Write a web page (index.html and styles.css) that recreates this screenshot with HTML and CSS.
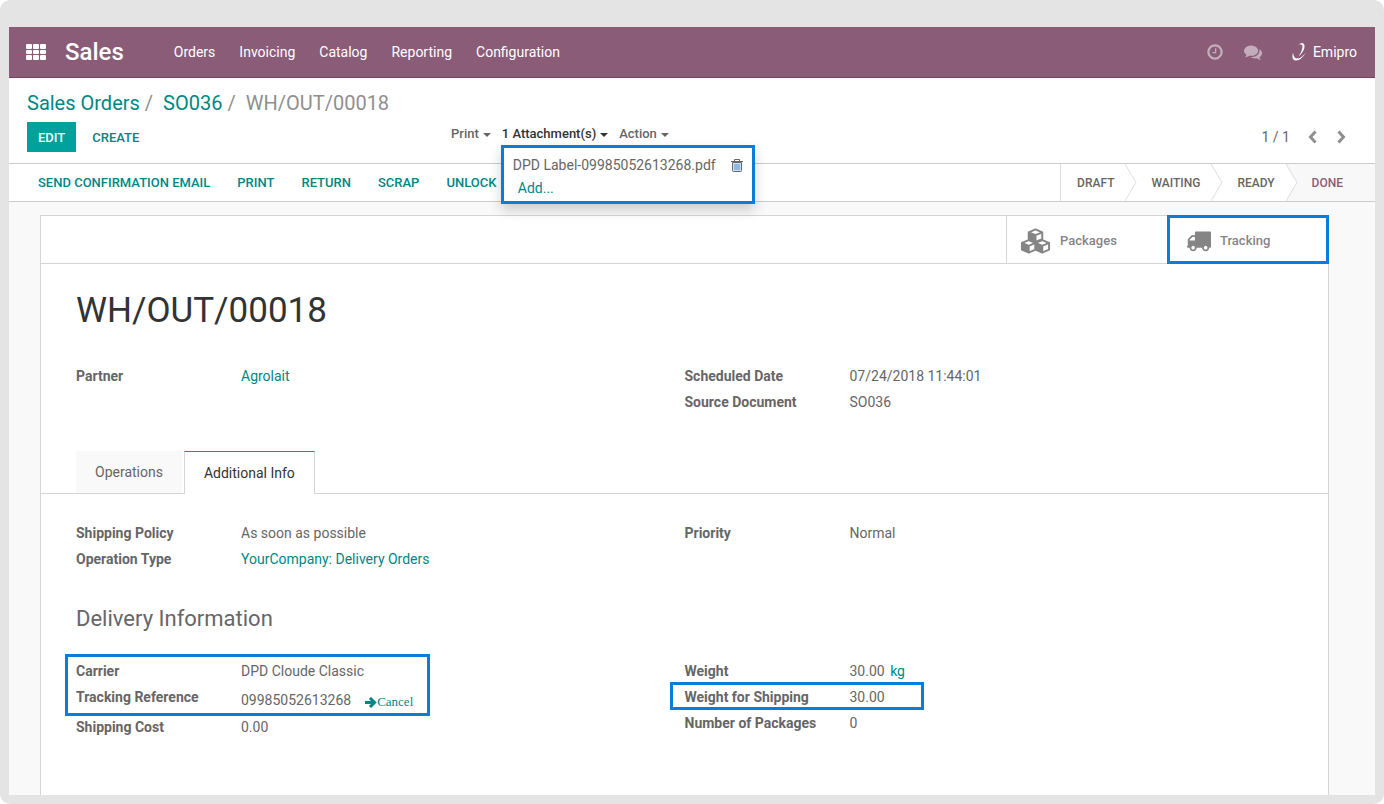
FILE: index.html
```html
<!DOCTYPE html>
<html lang="en">
<head>
<meta charset="utf-8">
<title>WH/OUT/00018 - Sales</title>
<link rel="stylesheet" href="styles.css">
</head>
<body>
<div class="app">
  <header class="navbar">
    <button class="apps" type="button" aria-label="Applications">
      <svg width="21" height="17" viewBox="0 0 21 17" fill="#fff"><rect x="0" y="0" width="6" height="5" rx="1"/><rect x="7" y="0" width="6" height="5" rx="1"/><rect x="14" y="0" width="6" height="5" rx="1"/><rect x="0" y="6" width="6" height="4" rx="1"/><rect x="7" y="6" width="6" height="4" rx="1"/><rect x="14" y="6" width="6" height="4" rx="1"/><rect x="0" y="11" width="6" height="5" rx="1"/><rect x="7" y="11" width="6" height="5" rx="1"/><rect x="14" y="11" width="6" height="5" rx="1"/></svg>
    </button>
    <a class="brand" href="#">Sales</a>
    <nav class="menu">
      <a href="#">Orders</a>
      <a href="#">Invoicing</a>
      <a href="#">Catalog</a>
      <a href="#">Reporting</a>
      <a href="#">Configuration</a>
    </nav>
    <div class="systray">
      <button type="button" aria-label="Activities"><svg width="18" height="18" viewBox="0 0 1792 1792" fill="#c4adbb"><path d="M1024 544v448q0 14-9 23t-23 9h-320q-14 0-23-9t-9-23v-64q0-14 9-23t23-9h224v-352q0-14 9-23t23-9h64q14 0 23 9t9 23zm416 352q0-148-73-273t-198-198-273-73-273 73-198 198-73 273 73 273 198 198 273 73 273-73 198-198 73-273zm224 0q0 209-103 385.5t-279.5 279.5-385.5 103-385.5-103-279.5-279.5-103-385.5 103-385.5 279.5-279.5 385.5-103 385.5 103 279.5 279.5 103 385.5z"/></svg></button>
      <button type="button" aria-label="Conversations"><svg width="18" height="18" viewBox="0 0 1792 1792" fill="#c4adbb"><path d="M1408 768q0 139-94 257t-256.5 186.5-353.5 68.5q-86 0-176-16-124 88-278 128-36 9-86 16h-3q-11 0-20.5-8t-11.5-21q-1-3-1-6.5t.5-6.5 2-6l2.5-5 3.5-5.5 4-5 4.5-5 4-4.5q5-6 23-25t26-29.5 22.5-29 25-38.5 20.5-44q-124-72-195-177t-71-224q0-139 94-257t256.5-186.5 353.5-68.5 353.5 68.5 256.5 186.5 94 257zm384 256q0 120-71 224.5t-195 176.5q10 24 20.5 44t25 38.5 22.5 29 26 29.5 23 25q1 1 4 4.5t4.5 5 4 5 3.5 5.5l2.5 5 2 6 .5 6.5-1 6.5q-3 14-13 22t-22 7q-50-7-86-16-154-40-278-128-90 16-176 16-271 0-472-132 58 4 88 4 161 0 309-45t264-129q125-92 192-212t67-254q0-77-23-152 129 71 204 178t75 230z"/></svg></button>
      <button class="user" type="button"><svg width="16" height="20" viewBox="0 0 16 20" fill="#fff"><path d="M1 10.500Q-1 18.500 4 18.500Q9 18.500 14 10.500Q9 16.500 5.500 16.500Q1.500 16.500 1 10.500Z"/><path d="M6 2.500Q12 -1 12.500 3.500Q13 9 6.500 14.500Q10 9.500 10.500 5Q10.500 1.500 6 2.500Z"/></svg>Emipro</button>
    </div>
  </header>

  <section class="control">
    <nav class="crumbs" aria-label="Breadcrumb">
      <a href="#">Sales Orders</a><span class="sep">/</span><a href="#">SO036</a><span class="sep">/</span><span>WH/OUT/00018</span>
    </nav>
    <div class="control-row">
      <div class="main-actions">
        <button class="btn primary" type="button">EDIT</button>
        <button class="btn" type="button">CREATE</button>
      </div>
      <div class="toggles">
        <button type="button">Print<i class="caret"></i></button>
        <div class="attach">
          <button class="open" type="button" aria-expanded="true">1 Attachment(s)<i class="caret"></i></button>
          <div class="dropdown">
            <div class="file">
              <a href="#">DPD Label-09985052613268.pdf</a>
              <button type="button" aria-label="Delete attachment"><svg width="12" height="13" viewBox="0 0 12 13" fill="none" stroke="#666"><path fill="#cfe3f5" d="M1.500 3.500h9v8q0 1-1 1h-7q-1 0-1-1z"/><path d="M0 2.500h12M3.500 2.500V.5h5v2"/><path stroke="#4b8fd0" d="M4 5v6M6 5v6M8 5v6"/></svg></button>
            </div>
            <button class="add" type="button">Add...</button>
          </div>
        </div>
        <button type="button">Action<i class="caret"></i></button>
      </div>
      <div class="pager">
        <span>1 / 1</span>
        <button type="button" aria-label="Previous"><svg width="9" height="14" viewBox="0 0 9 14" fill="none" stroke="#8f8f8f" stroke-width="3"><path d="M7.500 1.500L2.500 7l5 5.500"/></svg></button>
        <button type="button" aria-label="Next"><svg width="9" height="14" viewBox="0 0 9 14" fill="none" stroke="#8f8f8f" stroke-width="3"><path d="M1.500 1.500L6.500 7l-5 5.500"/></svg></button>
      </div>
    </div>
  </section>

  <section class="statusbar">
    <div class="status-actions">
      <button type="button">SEND CONFIRMATION EMAIL</button>
      <button type="button">PRINT</button>
      <button type="button">RETURN</button>
      <button type="button">SCRAP</button>
      <button type="button">UNLOCK</button>
    </div>
    <ol class="stages">
      <li>DRAFT</li>
      <li><svg width="12" height="37" viewBox="0 0 12 37"><path d="M0 0L11 18.500L0 37" fill="#fff" stroke="#ddd"/></svg>WAITING</li>
      <li><svg width="12" height="37" viewBox="0 0 12 37"><path d="M0 0L11 18.500L0 37" fill="#fff" stroke="#ddd"/></svg>READY</li>
      <li class="current"><svg width="12" height="37" viewBox="0 0 12 37"><path d="M0 0L11 18.500L0 37" fill="#fff" stroke="#ddd"/></svg>DONE</li>
    </ol>
  </section>

  <main class="form">
    <article class="sheet">
      <div class="stats">
        <button type="button"><svg width="31" height="26" viewBox="0 0 32 26" fill="#fff" stroke="#858585" stroke-width="2" stroke-linejoin="round"><path d="M9 4l7-3 7 3v7l-7 3-7-3z"/><path d="M2 15l7-3 7 3v7l-7 3-7-3z"/><path d="M16 15l7-3 7 3v7l-7 3-7-3z"/><path fill="none" d="M9 4l7 3 7-3M16 7v7M2 15l7 3 7-3M9 18v7M16 15l7 3 7-3M23 18v7"/><path fill="#858585" stroke="none" d="M9 4l7 3v7l-7-3zM2 15l7 3v7l-7-3zM16 15l7 3v7l-7-3z"/></svg>Packages</button>
        <button class="tracking" type="button"><svg width="25" height="25" viewBox="0 0 1792 1792" fill="#858585"><path d="M640 1408q0-52-38-90t-90-38-90 38-38 90 38 90 90 38 90-38 38-90zm-384-512h384v-256h-158q-13 0-22 9l-195 195q-9 9-9 22v30zm1280 512q0-52-38-90t-90-38-90 38-38 90 38 90 90 38 90-38 38-90zm256-1088v1024q0 15-4 26.500t-13.500 18.500-16.500 11.500-23.500 6-22.500 2-25.500 0-22.500-.5q0 106-75 181t-181 75-181-75-75-181h-384q0 106-75 181t-181 75-181-75-75-181h-64q-3 0-22.500.5t-25.500 0-22.500-2-23.500-6-16.500-11.500-13.500-18.500-4-26.500q0-26 19-45t45-19v-320q0-8-.5-35t0-38 2.500-34.500 6.500-37 14-30.500 22.500-30l198-198q19-19 50.500-32t58.500-13h160v-192q0-26 19-45t45-19h1024q26 0 45 19t19 45z"/></svg>Tracking</button>
      </div>
      <h1>WH/OUT/00018</h1>
      <div class="groups head">
        <dl>
          <div><dt>Partner</dt><dd><a href="#">Agrolait</a></dd></div>
        </dl>
        <dl>
          <div><dt>Scheduled Date</dt><dd>07/24/2018 11:44:01</dd></div>
          <div><dt>Source Document</dt><dd>SO036</dd></div>
        </dl>
      </div>
      <div class="tabs" role="tablist">
        <button type="button" role="tab" aria-selected="false">Operations</button>
        <button type="button" role="tab" aria-selected="true" class="active">Additional Info</button>
      </div>
      <div class="groups">
        <dl>
          <div><dt>Shipping Policy</dt><dd>As soon as possible</dd></div>
          <div><dt>Operation Type</dt><dd><a href="#">YourCompany: Delivery Orders</a></dd></div>
        </dl>
        <dl>
          <div><dt>Priority</dt><dd>Normal</dd></div>
        </dl>
      </div>
      <h2>Delivery Information</h2>
      <div class="groups">
        <dl>
          <div class="marked shipment">
            <div><dt>Carrier</dt><dd>DPD Cloude Classic</dd></div>
            <div class="tall"><dt>Tracking Reference</dt><dd>09985052613268 <a class="cancel" href="#"><svg width="12" height="11" viewBox="0 0 12 11" fill="none" stroke="#008784" stroke-width="3"><path d="M0 5.500h9M5 1l4.500 4.500L5 10"/></svg>Cancel</a></dd></div>
          </div>
          <div><dt>Shipping Cost</dt><dd>0.00</dd></div>
        </dl>
        <dl>
          <div><dt>Weight</dt><dd>30.00 <a class="unit" href="#">kg</a></dd></div>
          <div class="marked weight"><dt>Weight for Shipping</dt><dd>30.00</dd></div>
          <div><dt>Number of Packages</dt><dd>0</dd></div>
        </dl>
      </div>
    </article>
  </main>
</div>
</body>
</html>
```
FILE: styles.css
```css
*, *::after { box-sizing: border-box; }
html { background: #fff; }
body {
  margin: 0;
  min-height: 100vh;
  padding: 27px 9px 9px;
  display: flex;
  background: #e4e4e4;
  border-radius: 10px;
  font: 14px/20px Roboto, "Liberation Sans", sans-serif;
  color: #666;
}
button {
  border: 0;
  padding: 0;
  background: none;
  font: inherit;
  color: inherit;
  cursor: pointer;
}
a { color: #008784; text-decoration: none; }
svg { display: block; flex: none; }

.app { flex: 1; min-width: 0; display: flex; flex-direction: column; background: #fff; }

.navbar {
  display: flex;
  align-items: center;
  height: 51px;
  padding: 0 18px 0 17px;
  background: #8a5c78;
  border-bottom: 1px solid #6b4660;
  color: #fff;
}
.brand { margin-left: 18px; font-size: 24px; font-weight: 500; color: #fff; }
.menu { display: flex; gap: 24px; margin-left: 50px; }
.menu a { color: #fff; }
.systray { display: flex; align-items: center; gap: 20px; margin-left: auto; }
.user { display: flex; align-items: center; gap: 5px; margin-left: 10px; }

.control { padding: 13px 29px 11px 18px; border-bottom: 1px solid #ccc; }
.crumbs { font-size: 20px; line-height: 24px; color: #8f8f8f; }
.sep { margin: 0 10px 0 5px; }
.control-row { display: grid; grid-template-columns: 424px 1fr auto; margin-top: 7px; }
.main-actions { display: flex; gap: 5px; }
.btn { height: 30px; padding: 2px 11px 0; font-size: 13px; font-weight: 500; color: #008784; }
.primary { background: #00a09d; color: #fff; }
.toggles { display: flex; align-items: flex-start; gap: 11px; padding-top: 2px; font-size: 13px; font-weight: 500; }
.open { color: #333; }
.caret {
  display: inline-block;
  margin-left: 4px;
  vertical-align: 1px;
  border: 4px solid transparent;
  border-top-color: currentColor;
  border-bottom: 0;
}
.attach { position: relative; }
.dropdown {
  position: absolute;
  top: 21px;
  left: -1px;
  z-index: 2;
  width: 254px;
  padding: 7px 9px 3px;
  background: #fff;
  border: 3px solid #0a7ddb;
  box-shadow: 0 6px 12px rgba(0, 0, 0, .18);
  font-size: 14px;
  font-weight: 400;
}
.file { display: flex; align-items: center; justify-content: space-between; line-height: 20px; }
.file a { color: #666; white-space: nowrap; }
.add { display: block; margin: 3px 0 0 5px; color: #008784; }
.pager { display: flex; align-items: center; gap: 18px; }
.pager button + button { margin-left: 2px; }

.statusbar { display: flex; justify-content: space-between; height: 38px; border-bottom: 1px solid #ccc; }
.status-actions { display: flex; gap: 27px; padding-left: 29px; font-size: 13px; font-weight: 500; }
.status-actions button { color: #008784; }
.stages {
  display: flex;
  margin: 0;
  padding: 0;
  list-style: none;
  border-left: 1px solid #ddd;
  font-size: 12px;
  font-weight: 500;
}
.stages li { display: flex; align-items: center; gap: 14px; padding-right: 11px; }
.stages li:first-child { padding-left: 16px; }
.stages .current { padding-right: 32px; background: #f8f8f8; color: #8a5c78; }

.form { flex: 1; display: flex; padding: 13px 46px 0 31px; background: #f9f9f9; }
.sheet { flex: 1; padding: 0 35px 40px; background: #fff; border: 1px solid #d5d5d5; border-bottom: 0; }
.stats {
  display: flex;
  justify-content: flex-end;
  height: 48px;
  margin: 0 -35px;
  border-bottom: 1px solid #d5d5d5;
}
.stats button {
  display: flex;
  align-items: center;
  gap: 9px;
  width: 161px;
  padding: 2px 0 0 13px;
  border-left: 1px solid #d5d5d5;
  font-size: 13px;
  font-weight: 500;
  color: #858585;
}
.stats .tracking { position: relative; padding-left: 18px; }
.tracking::after, .marked::after {
  content: "";
  position: absolute;
  border: 3px solid #0a7ddb;
  pointer-events: none;
}
.tracking::after { inset: -1px; }
h1 { margin: 24px 0 0; font-size: 35px; line-height: 46px; font-weight: 400; color: #333; }
h2 { margin: 34px 0 26px; font-size: 22px; line-height: 26px; font-weight: 400; }
.groups { display: grid; grid-template-columns: 1fr 1fr; }
.head { margin: 29px 0 36px; }
dl { margin: 0; }
dl > div:not(.shipment), .shipment > div { display: flex; min-height: 26px; padding: 3px 0; }
dt { width: 165px; flex: none; font-weight: 700; }
dd { margin: 0; }
.unit { margin-left: 2px; }
.marked { position: relative; }
.shipment::after { inset: -4px auto -2px -11px; width: 365px; }
.weight::after { inset: -2px auto 0 -15px; width: 254px; }
.tall dd { display: flex; gap: 14px; padding-top: 3px; }
.cancel { display: flex; align-items: center; padding-top: 3px; font: 13px/18px "Liberation Serif", serif; }

.tabs { display: flex; gap: 2px; margin: 0 -35px 26px; padding: 0 35px; border-bottom: 1px solid #d5d5d5; }
.tabs button { height: 42px; padding: 0 19px; background: #f9f9f9; }
.tabs .active {
  height: 43px;
  margin-bottom: -1px;
  background: #fff;
  border: 1px solid #d5d5d5;
  border-top-color: #8a5c78;
  border-bottom: 0;
  color: #333;
}
```
